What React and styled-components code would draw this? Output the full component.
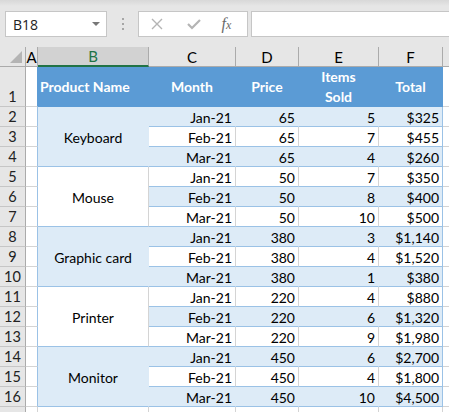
import React from "react";
import styled, { createGlobalStyle } from "styled-components";

const LIGHT = "#ddebf7";
const HEAD = "#5b9bd5";
const LINE = "#9bc2e6";
const GRID = "#d4d4d4";

const GlobalStyle = createGlobalStyle`
  html, body {
    margin: 0;
    padding: 0;
    background: #fff;
    overflow: hidden;
  }
  body {
    font-family: Lato, "Liberation Sans", sans-serif;
  }
`;

const Window = styled.div`
  width: 449px;
  height: 412px;
  overflow: hidden;
  background: #fff;
`;

const FormulaBar = styled.div`
  height: 47px;
  box-sizing: border-box;
  background: linear-gradient(#d8d8d8, #e6e6e6 6px);
  display: flex;
  align-items: flex-start;
  padding: 11px 0 0 5px;
`;

const NameBox = styled.div`
  width: 102px;
  height: 26px;
  box-sizing: border-box;
  border: 1px solid #c6c6c6;
  background: #fff;
  display: flex;
  align-items: center;
  justify-content: space-between;
  padding: 0 6px 0 7px;
  font-family: "Open Sans", sans-serif;
  font-size: 14px;
  color: #222;
`;

const DropArrow = styled.span`
  width: 0;
  height: 0;
  border-left: 4px solid transparent;
  border-right: 4px solid transparent;
  border-top: 4px solid #777;
`;

const Grip = styled.div`
  width: 31px;
  height: 26px;
  display: flex;
  flex-direction: column;
  align-items: center;
  justify-content: center;
  gap: 3px;
  span {
    width: 2px;
    height: 2px;
    background: #a6a6a6;
  }
`;

const FxButtons = styled.div`
  width: 110px;
  height: 26px;
  box-sizing: border-box;
  border: 1px solid #c6c6c6;
  background: #fff;
  display: grid;
  grid-template-columns: 36px 37px 1fr;
  align-items: center;
  justify-items: center;
`;

const FxLabel = styled.span`
  font-family: "Liberation Serif", serif;
  font-style: italic;
  font-size: 16px;
  color: #6a6a6a;
  padding-right: 6px;
  sub {
    font-size: 12px;
    vertical-align: baseline;
  }
`;

const FormulaInput = styled.div`
  flex: 1;
  height: 26px;
  margin-left: 3px;
  box-sizing: border-box;
  border: 1px solid #c6c6c6;
  border-right: none;
  background: #fff;
`;

const Sheet = styled.div`
  display: grid;
  grid-template-columns: 26px 12px 111px 87px 63px 80px 64px 1fr;
  grid-template-rows: 20px 40px repeat(15, 20px) 20px;
  font-size: 14px;
  color: #000;
`;

const ColHead = styled.div`
  box-sizing: border-box;
  background: ${(p) => (p.$active ? "#d2d2d2" : "#e6e6e6")};
  border-right: 1px solid #ababab;
  border-bottom: ${(p) => (p.$active ? "2px solid #217346" : "1px solid #ababab")};
  color: ${(p) => (p.$active ? "#217346" : "#000")};
  display: flex;
  align-items: center;
  justify-content: center;
  font-size: 15px;
`;

const Corner = styled(ColHead)`
  align-items: flex-end;
  justify-content: flex-end;
  padding: 0 3px 3px 0;
`;

const RowHead = styled.div`
  box-sizing: border-box;
  background: #e6e6e6;
  border-right: 1px solid #ababab;
  border-bottom: 1px solid #c6c6c6;
  display: flex;
  align-items: ${(p) => (p.$tall ? "flex-end" : "center")};
  justify-content: center;
  padding-bottom: ${(p) => (p.$tall ? "1px" : "0")};
  font-size: 14.5px;
  color: #222;
`;

const Cell = styled.div`
  box-sizing: border-box;
  background: ${(p) => p.$bg || "#fff"};
  border-right: 1px solid ${(p) => p.$right || GRID};
  border-bottom: 1px solid ${(p) => p.$bottom || GRID};
  grid-row: ${(p) => (p.$span ? `span ${p.$span}` : "auto")};
  display: flex;
  align-items: center;
  justify-content: ${(p) => p.$align || "flex-end"};
  padding: 1px 3px 0;
  white-space: nowrap;
  overflow: hidden;
`;

const HeadCell = styled(Cell)`
  background: ${HEAD};
  border-right-color: ${HEAD};
  border-bottom-color: ${HEAD};
  color: #fff;
  font-weight: 700;
  text-align: center;
  line-height: 20px;
  white-space: normal;
  padding: 0 2px;
`;

const groups = [
  { name: "Keyboard", price: 65, rows: [["Jan-21", 5, "$325"], ["Feb-21", 7, "$455"], ["Mar-21", 4, "$260"]] },
  { name: "Mouse", price: 50, rows: [["Jan-21", 7, "$350"], ["Feb-21", 8, "$400"], ["Mar-21", 10, "$500"]] },
  { name: "Graphic card", price: 380, rows: [["Jan-21", 3, "$1,140"], ["Feb-21", 4, "$1,520"], ["Mar-21", 1, "$380"]] },
  { name: "Printer", price: 220, rows: [["Jan-21", 4, "$880"], ["Feb-21", 6, "$1,320"], ["Mar-21", 9, "$1,980"]] },
  { name: "Monitor", price: 450, rows: [["Jan-21", 6, "$2,700"], ["Feb-21", 4, "$1,800"], ["Mar-21", 10, "$4,500"]] },
];

const letters = ["A", "B", "C", "D", "E", "F", ""];

const CrossIcon = () => (
  <svg width="12" height="12" viewBox="0 0 12 12">
    <path d="M1 1 L11 11 M11 1 L1 11" stroke="#b4b4b4" strokeWidth="1.4" fill="none" />
  </svg>
);

const CheckIcon = () => (
  <svg width="14" height="12" viewBox="0 0 14 12">
    <path d="M1 6 L5 10 L13 2" stroke="#b4b4b4" strokeWidth="2.2" fill="none" />
  </svg>
);

const CornerMark = () => (
  <svg width="12" height="12" viewBox="0 0 12 12">
    <path d="M12 0 L12 12 L0 12 Z" fill="#b4b4b4" />
  </svg>
);

const DataRows = () => {
  const out = [];
  groups.forEach((g, gi) => {
    const groupFill = gi % 2 === 0 ? LIGHT : null;
    g.rows.forEach(([month, sold, total], i) => {
      const n = 2 + gi * 3 + i;
      const fill = n % 2 === 0 ? LIGHT : null;
      const inner = fill || GRID;
      out.push(<RowHead key={`h${n}`}>{n}</RowHead>);
      out.push(<Cell key={`a${n}`} $right={LINE} />);
      if (i === 0) {
        out.push(
          <Cell key={`b${n}`} $span={3} $bg={groupFill} $right={groupFill || GRID} $bottom={LINE} $align="center">
            {g.name}
          </Cell>
        );
      }
      out.push(<Cell key={`c${n}`} $bg={fill} $right={inner} $bottom={LINE}>{month}</Cell>);
      out.push(<Cell key={`d${n}`} $bg={fill} $right={inner} $bottom={LINE}>{g.price}</Cell>);
      out.push(<Cell key={`e${n}`} $bg={fill} $right={inner} $bottom={LINE}>{sold}</Cell>);
      out.push(<Cell key={`f${n}`} $bg={fill} $right={LINE} $bottom={LINE}>{total}</Cell>);
      out.push(<Cell key={`g${n}`} $right="#fff" />);
    });
  });
  return out;
};

const App = () => {
  return (
    <Window>
      <GlobalStyle />
      <FormulaBar>
        <NameBox>
          B18
          <DropArrow />
        </NameBox>
        <Grip>
          <span />
          <span />
          <span />
        </Grip>
        <FxButtons>
          <CrossIcon />
          <CheckIcon />
          <FxLabel>
            f<sub>x</sub>
          </FxLabel>
        </FxButtons>
        <FormulaInput />
      </FormulaBar>
      <Sheet>
        <Corner>
          <CornerMark />
        </Corner>
        {letters.map((l) => (
          <ColHead key={`col${l}`} $active={l === "B"}>
            {l}
          </ColHead>
        ))}

        <RowHead $tall>1</RowHead>
        <Cell $right={HEAD} />
        <HeadCell $align="flex-start">Product Name</HeadCell>
        <HeadCell $align="center">Month</HeadCell>
        <HeadCell $align="center">Price</HeadCell>
        <HeadCell $align="center">
          Items
          <br />
          Sold
        </HeadCell>
        <HeadCell $align="center" $right={HEAD}>Total</HeadCell>
        <Cell $right="#fff" />

        {DataRows()}

        <RowHead />
        {[1, 2, 3, 4, 5, 6].map((c) => (
          <Cell key={`r17${c}`} />
        ))}
        <Cell $right="#fff" />
      </Sheet>
    </Window>
  );
};

export default App;
